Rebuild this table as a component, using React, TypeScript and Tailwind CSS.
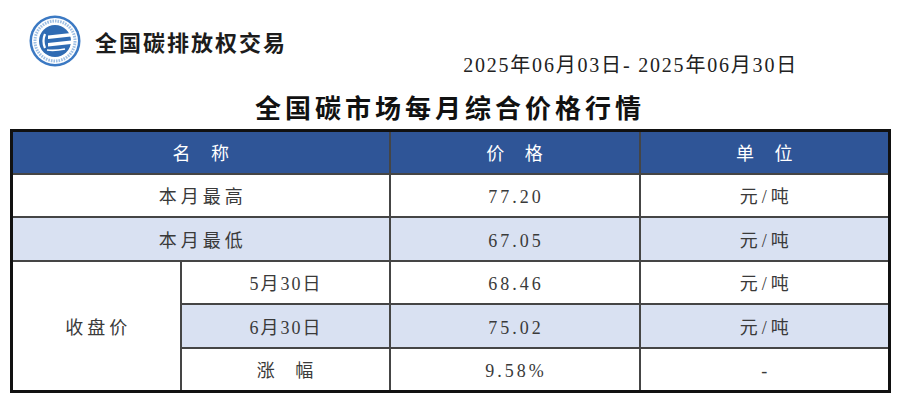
import React from 'react';

const serif = "font-['Liberation_Serif','Noto_Sans_CJK_SC',serif]";

const Logo: React.FC = () => (
  <svg width="52" height="52" viewBox="0 0 52 52">
    <circle cx="26" cy="26" r="25.5" fill="#3b79c3" />
    <circle cx="26" cy="26" r="23" fill="#ffffff" />
    <circle cx="26" cy="26" r="20" fill="none" stroke="#9fbfe3" strokeWidth="3" strokeDasharray="1.6 1" />
    <circle cx="26" cy="26" r="17.5" fill="#ffffff" />
    <circle cx="26" cy="26" r="16" fill="#2f6bb3" />
    {/* E mark */}
    <path d="M16 19 Q13 26 16 33" fill="none" stroke="#ffffff" strokeWidth="2.2" />
    <path d="M19 20.5 L42 18 L42 21.5 L19 24 Z" fill="#ffffff" />
    <path d="M19 28 L42 25.5 L42 29 L19 31.5 Z" fill="#ffffff" />
    <path d="M18 35 Q26 36 36 34" fill="none" stroke="#ffffff" strokeWidth="1.6" />
  </svg>
);

interface Row {
  label?: string;
  sub?: string;
  price: string;
  unit: string;
  shaded: boolean;
}

const rows: Row[] = [
  { label: '本月最高', price: '77.20', unit: '元/吨', shaded: false },
  { label: '本月最低', price: '67.05', unit: '元/吨', shaded: true },
  { sub: '5月30日', price: '68.46', unit: '元/吨', shaded: false },
  { sub: '6月30日', price: '75.02', unit: '元/吨', shaded: true },
  { sub: '涨 幅', price: '9.58%', unit: '-', shaded: false },
];

const cell = 'border-2 border-[#454545] h-[43.5px] p-0 pt-[5px] text-center align-middle';

export default function App() {
  return (
    <div className={`w-[900px] h-[413px] bg-white overflow-hidden ${serif}`}>
      {/* top bar: logo + date */}
      <div className="flex items-start pt-[15px]">
        <div className="flex items-center ml-[29px]">
          <Logo />
          <span className="ml-[14px] text-[22px] font-bold text-[#1c1c1c] tracking-[2px] font-['Noto_Sans_CJK_SC',sans-serif]">
            全国碳排放权交易
          </span>
        </div>
        <div className="ml-auto mr-[102px] mt-[37px] text-[20px] leading-[26px] tracking-[1.8px] text-[#222]">
          2025年06月03日- 2025年06月30日
        </div>
      </div>

      <h1 className="mt-[11px] text-center text-[26px] leading-[36px] font-bold tracking-[4px] text-[#111] font-['Noto_Sans_CJK_SC',sans-serif]">
        全国碳市场每月综合价格行情
      </h1>

      <div className="mt-[4px] px-[10px]">
        <table className="w-[879px] border-collapse border-[3px] border-[#111] table-fixed text-[18px] text-[#3a3a3a]">
          <colgroup>
            <col className="w-[169px]" />
            <col className="w-[209px]" />
            <col className="w-[250px]" />
            <col className="w-[250px]" />
          </colgroup>
          <thead>
            <tr className="bg-[#2f5597] text-white">
              <th colSpan={2} className={`${cell} h-[43px] font-normal tracking-[8px] pl-[8px]`}>名 称</th>
              <th className={`${cell} h-[43px] font-normal tracking-[8px] pl-[8px]`}>价 格</th>
              <th className={`${cell} h-[43px] font-normal tracking-[8px] pl-[8px]`}>单 位</th>
            </tr>
          </thead>
          <tbody>
            {rows.map((r, i) => (
              <tr key={i}>
                {r.label && (
                  <td colSpan={2} className={`${cell} tracking-[4px] pl-[4px] ${r.shaded ? 'bg-[#d9e1f2]' : 'bg-white'}`}>
                    {r.label}
                  </td>
                )}
                {i === 2 && (
                  <td rowSpan={3} className={`${cell} bg-white tracking-[4px] pl-[4px]`}>收盘价</td>
                )}
                {r.sub && (
                  <td className={`${cell} ${r.shaded ? 'bg-[#d9e1f2]' : 'bg-white'} ${r.sub === '涨 幅' ? 'tracking-[8px] pl-[8px]' : 'tracking-[2px] pl-[2px]'}`}>
                    {r.sub}
                  </td>
                )}
                <td className={`${cell} tracking-[3px] pl-[3px] ${r.shaded ? 'bg-[#d9e1f2]' : 'bg-white'}`}>{r.price}</td>
                <td className={`${cell} tracking-[4px] pl-[4px] ${r.shaded ? 'bg-[#d9e1f2]' : 'bg-white'}`}>{r.unit}</td>
              </tr>
            ))}
          </tbody>
        </table>
      </div>
    </div>
  );
}
